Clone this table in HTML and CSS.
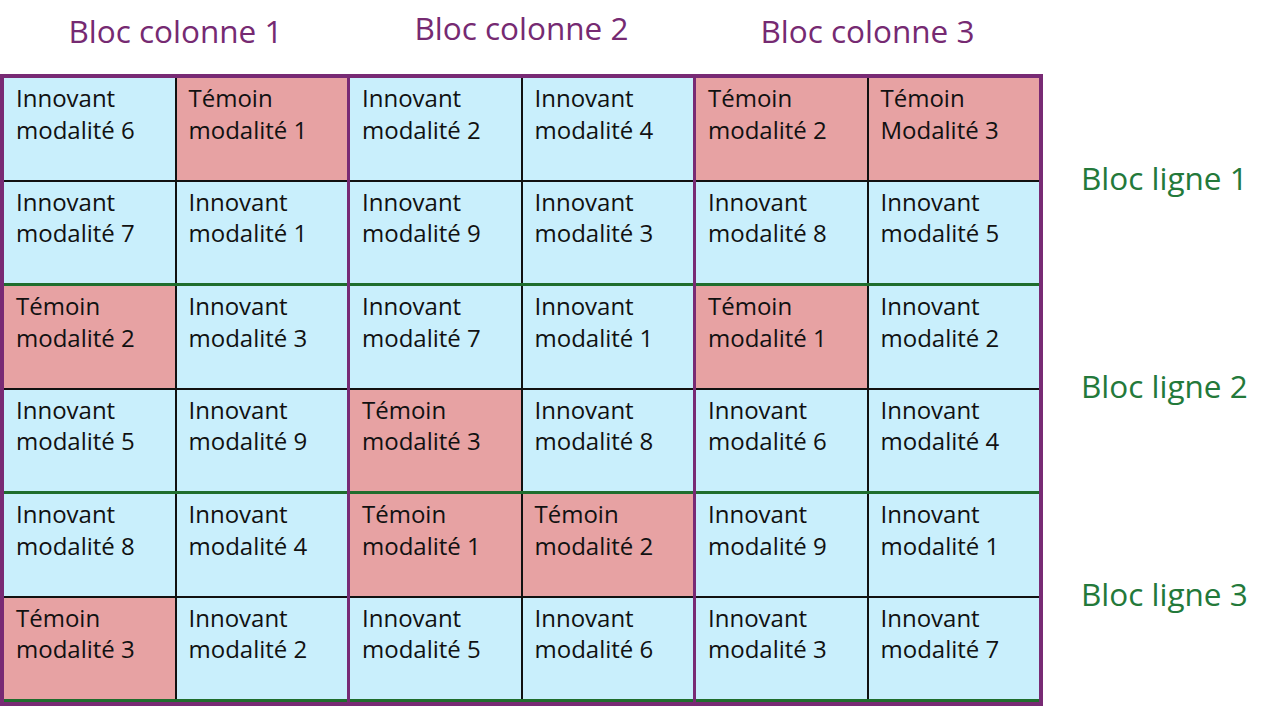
FILE: index.html
```html
<!DOCTYPE html>
<html lang="fr">
<head>
<meta charset="utf-8">
<title>Blocs</title>
<link rel="stylesheet" href="styles.css">
</head>
<body>
<div class="page">
  <div class="left">
    <div class="heads">
      <div class="head">Bloc colonne 1</div>
      <div class="head head-up">Bloc colonne 2</div>
      <div class="head">Bloc colonne 3</div>
    </div>
    <div class="grid">
      <div class="colblock">
        <div class="rowblock">
          <div class="cell inn">Innovant<br>modalité 6</div>
          <div class="cell tem">Témoin<br>modalité 1</div>
          <div class="cell inn">Innovant<br>modalité 7</div>
          <div class="cell inn">Innovant<br>modalité 1</div>
        </div>
        <div class="rowblock">
          <div class="cell tem">Témoin<br>modalité 2</div>
          <div class="cell inn">Innovant<br>modalité 3</div>
          <div class="cell inn">Innovant<br>modalité 5</div>
          <div class="cell inn">Innovant<br>modalité 9</div>
        </div>
        <div class="rowblock">
          <div class="cell inn">Innovant<br>modalité 8</div>
          <div class="cell inn">Innovant<br>modalité 4</div>
          <div class="cell tem">Témoin<br>modalité 3</div>
          <div class="cell inn">Innovant<br>modalité 2</div>
        </div>
      </div>
      <div class="colblock">
        <div class="rowblock">
          <div class="cell inn">Innovant<br>modalité 2</div>
          <div class="cell inn">Innovant<br>modalité 4</div>
          <div class="cell inn">Innovant<br>modalité 9</div>
          <div class="cell inn">Innovant<br>modalité 3</div>
        </div>
        <div class="rowblock">
          <div class="cell inn">Innovant<br>modalité 7</div>
          <div class="cell inn">Innovant<br>modalité 1</div>
          <div class="cell tem">Témoin<br>modalité 3</div>
          <div class="cell inn">Innovant<br>modalité 8</div>
        </div>
        <div class="rowblock">
          <div class="cell tem">Témoin<br>modalité 1</div>
          <div class="cell tem">Témoin<br>modalité 2</div>
          <div class="cell inn">Innovant<br>modalité 5</div>
          <div class="cell inn">Innovant<br>modalité 6</div>
        </div>
      </div>
      <div class="colblock">
        <div class="rowblock">
          <div class="cell tem">Témoin<br>modalité 2</div>
          <div class="cell tem">Témoin<br>Modalité 3</div>
          <div class="cell inn">Innovant<br>modalité 8</div>
          <div class="cell inn">Innovant<br>modalité 5</div>
        </div>
        <div class="rowblock">
          <div class="cell tem">Témoin<br>modalité 1</div>
          <div class="cell inn">Innovant<br>modalité 2</div>
          <div class="cell inn">Innovant<br>modalité 6</div>
          <div class="cell inn">Innovant<br>modalité 4</div>
        </div>
        <div class="rowblock">
          <div class="cell inn">Innovant<br>modalité 9</div>
          <div class="cell inn">Innovant<br>modalité 1</div>
          <div class="cell inn">Innovant<br>modalité 3</div>
          <div class="cell inn">Innovant<br>modalité 7</div>
        </div>
      </div>
    </div>
  </div>
  <div class="labels">
    <div class="label">Bloc ligne 1</div>
    <div class="label">Bloc ligne 2</div>
    <div class="label">Bloc ligne 3</div>
  </div>
</div>
</body>
</html>
```

FILE: styles.css
```css
html, body {
  margin: 0;
  padding: 0;
  background: #ffffff;
}

body {
  font-family: "Open Sans", "Noto Sans", sans-serif;
  overflow: hidden;
}

.page {
  display: flex;
  align-items: flex-start;
  width: 1280px;
  height: 706px;
}

.left {
  display: flex;
  flex-direction: column;
  width: 1043px;
}

.heads {
  display: flex;
  gap: 3px;
  padding: 0 4px;
  height: 74px;
}

.head {
  width: 343px;
  text-align: center;
  color: #762a72;
  font-size: 31.5px;
  line-height: 40px;
  padding-top: 11px;
  box-sizing: border-box;
  white-space: nowrap;
}

.head-up {
  padding-top: 8px;
}

.grid {
  display: flex;
  gap: 3px;
  background: #782a74;
  border: 4px solid #782a74;
}

.colblock {
  display: flex;
  flex-direction: column;
  gap: 3px;
  padding-bottom: 3px;
  width: 343px;
  background: #1f6d2d;
}

.rowblock {
  display: grid;
  grid-template-columns: 1fr 1fr;
  grid-template-rows: 1fr 1fr;
  gap: 2px;
  height: 205px;
  background: #111111;
}

.cell {
  font-size: 24px;
  line-height: 31.5px;
  color: #111111;
  padding: 4px 0 0 12px;
  box-sizing: border-box;
  white-space: nowrap;
}

.inn {
  background: #c9effc;
}

.tem {
  background: #e7a2a3;
}

.labels {
  display: flex;
  flex-direction: column;
  gap: 3px;
  padding-top: 78px;
  margin-left: 38px;
}

.label {
  height: 205px;
  display: flex;
  align-items: center;
  padding-bottom: 6px;
  box-sizing: border-box;
  color: #23793a;
  font-size: 31.5px;
  white-space: nowrap;
}
```
